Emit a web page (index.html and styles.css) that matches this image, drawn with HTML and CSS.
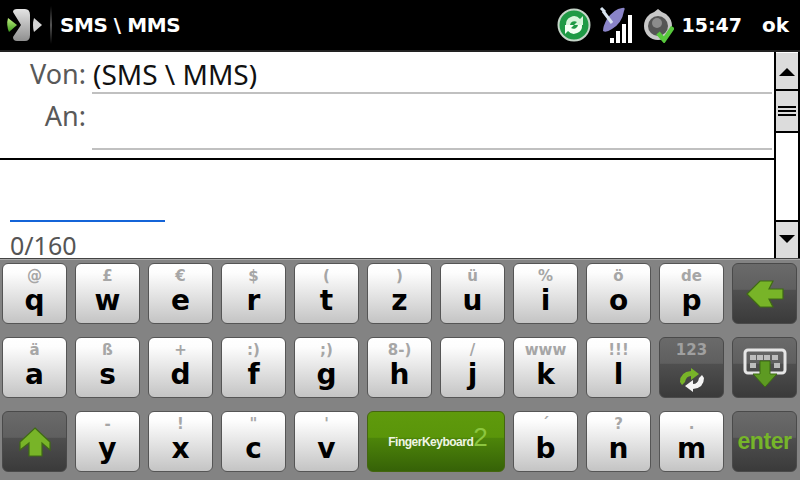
FILE: index.html
```html
<!DOCTYPE html>
<html lang="de">
<head>
<meta charset="utf-8">
<title>SMS \ MMS</title>
<link rel="stylesheet" href="styles.css">
</head>
<body>
<div class="screen">
  <header class="titlebar">
    <svg class="logo" width="46" height="40" viewBox="0 0 46 40">
      <defs>
        <linearGradient id="lg" x1="0" y1="0" x2="0" y2="1"><stop offset="0" stop-color="#e4e4e4"/><stop offset="1" stop-color="#8f8f8f"/></linearGradient>
        <linearGradient id="lgg" x1="0" y1="0" x2="0" y2="1"><stop offset="0" stop-color="#c0f080"/><stop offset="1" stop-color="#3c9a1a"/></linearGradient>
      </defs>
      <path d="M6 13 L15 20 L7 27 Q4 20 6 13Z" fill="url(#lgg)"/>
      <path d="M11 7 Q11 4 15 4 L23 4 Q28 4 28 10 L28 30 Q28 36 23 36 L15 36 Q11 36 11 32 L19 20 Z" fill="url(#lg)"/>
      <path d="M32 13 L40 20 L32 27 Q30 20 32 13Z" fill="#d4d4d4"/>
    </svg>
    <span class="divider"></span>
    <h1 class="title">SMS \ MMS</h1>
    <div class="tray">
      <svg class="sync" width="34" height="34" viewBox="0 0 34 34">
        <circle cx="17" cy="17" r="15.5" fill="#1f9a45" stroke="#c5d5c8" stroke-width="2"/>
        <path d="M9 17 A8 8 0 0 1 23 11 L26 8 L26 17 L17 17 L20 14 A4.5 4.5 0 0 0 13 17Z" fill="#d8f5dc"/>
        <path d="M25 17 A8 8 0 0 1 11 23 L8 26 L8 17 L17 17 L14 20 A4.5 4.5 0 0 0 21 17Z" fill="#f4fff4"/>
      </svg>
      <svg class="signal" width="34" height="40" viewBox="0 0 34 40">
        <path d="M5 26 Q8 28 14 24 Q24 18 26 6 Q28 2 24 3 Q16 4 9 14 Q5 21 5 26Z" fill="#8a84c8"/>
        <path d="M14 18 L5 6 M3 3 L7 7" stroke="#d8e4f0" stroke-width="3"/>
        <path d="M12 38h4v-5h-4zM18 38h4V26h-4zM24 38h4V19h-4zM30 38h4V10h-4z" fill="#fff"/>
      </svg>
      <svg class="volume" width="32" height="36" viewBox="0 0 32 36">
        <path d="M16 2 Q19 5 24 7 Q30 12 30 19 A14 14 0 0 1 2 19 Q2 12 8 7 Q13 5 16 2Z" fill="#c8c8c8"/>
        <circle cx="16" cy="19" r="10" fill="#555"/>
        <circle cx="15" cy="16" r="5" fill="#8c8c8c"/>
        <path d="M16 26 L22 33 L31 20" fill="none" stroke="#57c83c" stroke-width="4.5"/>
      </svg>
      <span class="clock">15:47</span>
      <span class="ok">ok</span>
    </div>
  </header>

  <main class="content">
    <div class="compose">
      <section class="fields">
        <div class="field field-from">
          <span class="label">Von:</span>
          <span class="value">(SMS \ MMS)</span>
        </div>
        <div class="field field-to">
          <span class="label">An:</span>
          <span class="value"></span>
        </div>
      </section>
      <section class="message">
        <div class="caret-line"></div>
        <div class="counter">0/160</div>
      </section>
    </div>
    <aside class="scrollbar">
      <div class="sb-btn sb-up"><span class="arrow-up"></span></div>
      <div class="sb-thumb"><span class="grip"></span><span class="grip"></span><span class="grip"></span></div>
      <div class="sb-track"></div>
      <div class="sb-btn sb-down"><span class="arrow-down"></span></div>
    </aside>
  </main>

  <section class="keyboard">
    <div class="key"><span class="alt">@</span><span class="ch">q</span></div>
    <div class="key"><span class="alt">£</span><span class="ch">w</span></div>
    <div class="key"><span class="alt">€</span><span class="ch">e</span></div>
    <div class="key"><span class="alt">$</span><span class="ch">r</span></div>
    <div class="key"><span class="alt">(</span><span class="ch">t</span></div>
    <div class="key"><span class="alt">)</span><span class="ch">z</span></div>
    <div class="key"><span class="alt">ü</span><span class="ch">u</span></div>
    <div class="key"><span class="alt">%</span><span class="ch">i</span></div>
    <div class="key"><span class="alt">ö</span><span class="ch">o</span></div>
    <div class="key"><span class="alt">de</span><span class="ch">p</span></div>
    <div class="key dark">
      <svg width="38" height="28" viewBox="0 0 38 28"><path d="M1 14 L14 1 L27 1 L23 9 L37 9 L37 19 L23 19 L27 27 L14 27Z" fill="#78b428" stroke="#3f6a14" stroke-width="1.2"/></svg>
    </div>

    <div class="key"><span class="alt">ä</span><span class="ch">a</span></div>
    <div class="key"><span class="alt">ß</span><span class="ch">s</span></div>
    <div class="key"><span class="alt">+</span><span class="ch">d</span></div>
    <div class="key"><span class="alt">:)</span><span class="ch">f</span></div>
    <div class="key"><span class="alt">;)</span><span class="ch">g</span></div>
    <div class="key"><span class="alt">8-)</span><span class="ch">h</span></div>
    <div class="key"><span class="alt">/</span><span class="ch">j</span></div>
    <div class="key"><span class="alt">www</span><span class="ch">k</span></div>
    <div class="key"><span class="alt">!!!</span><span class="ch">l</span></div>
    <div class="key dark sym">
      <span class="alt">123</span>
      <svg width="30" height="26" viewBox="0 0 30 26"><path d="M3 15 Q3 5 14 4 L14 1 L22 7 L14 13 L14 9 Q9 9 8 15 L5 18Z" fill="#78b428"/><path d="M27 11 Q27 21 16 22 L16 25 L8 19 L16 13 L16 17 Q21 17 22 11 L25 8Z" fill="#f4f4f4"/></svg>
    </div>
    <div class="key dark">
      <svg width="44" height="40" viewBox="0 0 44 40">
        <rect x="2" y="2" width="40" height="23" rx="3" fill="none" stroke="#e6e6e6" stroke-width="3"/>
        <path d="M7 7h6v5H7zM14 7h6v5h-6zM21 7h6v5h-6zM29 7h6v5h-6zM7 15h6v5H7zM31 15h6v5h-6z" fill="#bdbdbd"/>
        <path d="M17 13h10v13h7L22 39 10 26h7Z" fill="#5d9a22" stroke="#3c6a12"/>
      </svg>
    </div>

    <div class="key dark">
      <svg width="32" height="30" viewBox="0 0 32 30"><path d="M16 1 L31 15 L31 23 L23 16 L23 29 L10 29 L10 16 L1 23 L1 15Z" fill="#78b428" stroke="#3f6a14" stroke-width="1.2"/></svg>
    </div>
    <div class="key"><span class="alt">-</span><span class="ch">y</span></div>
    <div class="key"><span class="alt">!</span><span class="ch">x</span></div>
    <div class="key"><span class="alt">"</span><span class="ch">c</span></div>
    <div class="key"><span class="alt">'</span><span class="ch">v</span></div>
    <div class="key brand"><span class="brand-name">FingerKeyboard</span><span class="brand-two">2</span></div>
    <div class="key"><span class="alt">´</span><span class="ch">b</span></div>
    <div class="key"><span class="alt">?</span><span class="ch">n</span></div>
    <div class="key"><span class="alt">.</span><span class="ch">m</span></div>
    <div class="key dark"><span class="enter">enter</span></div>
  </section>
</div>
</body>
</html>
```
FILE: styles.css
```css
* { box-sizing: border-box; }
html, body { margin: 0; padding: 0; }
body { background: #fff; overflow: hidden; }
.screen { width: 800px; height: 480px; display: flex; flex-direction: column; font-family: "DejaVu Sans", sans-serif; }

.titlebar { height: 52px; flex: none; background: #000; border-bottom: 2px solid #222; display: flex; align-items: center; color: #fff; padding-left: 2px; }
.logo { flex: none; }
.divider { width: 2px; height: 38px; margin-left: 2px; background: linear-gradient(#000, #555 50%, #000); }
.title { margin: 0 0 0 8px; font: bold 20px "DejaVu Sans", sans-serif; letter-spacing: -0.45px; white-space: nowrap; }
.tray { margin-left: auto; display: flex; align-items: center; height: 100%; }
.sync { margin-right: 7px; }
.signal { margin-right: 10px; }
.volume { margin-right: 7px; }
.clock { font: bold 19px "DejaVu Sans", sans-serif; }
.ok { font: bold 20px "DejaVu Sans", sans-serif; margin-left: 20px; margin-right: 11px; }

.content { height: 206px; flex: none; display: flex; }
.compose { flex: 1; display: flex; flex-direction: column; min-width: 0; }
.fields { height: 108px; flex: none; border-bottom: 2px solid #000; font-family: "Noto Sans", sans-serif; }
.field { display: flex; }
.field-from { height: 42px; }
.field-to { height: 56px; }
.label { width: 86px; text-align: right; color: #595959; line-height: 44px; flex: none; font-size: 27px; }
.value { margin-left: 6px; margin-right: 2px; padding-left: 1px; flex: 1; border-bottom: 2px solid #c0c0c0; color: #111; line-height: 44px; font-size: 28px; white-space: nowrap; }
.message { flex: 1; padding-left: 10px; display: flex; flex-direction: column; }
.caret-line { width: 155px; height: 2px; background: #1464d8; margin-top: 60px; }
.counter { font: 25px/34px "Noto Sans", sans-serif; color: #555; margin-top: 6px; }

.scrollbar { width: 26px; flex: none; border-left: 2px solid #000; border-right: 2px solid #000; display: flex; flex-direction: column; }
.sb-btn { flex: none; background: #dcdcdc; display: flex; align-items: center; justify-content: center; }
.sb-up { height: 38px; border-bottom: 2px solid #000; margin-top: 1px; padding-top: 2px; }
.sb-down { height: 38px; border-top: 2px solid #000; padding-bottom: 2px; }
.arrow-up { width: 0; height: 0; border-left: 8px solid transparent; border-right: 8px solid transparent; border-bottom: 8px solid #000; }
.arrow-down { width: 0; height: 0; border-left: 8px solid transparent; border-right: 8px solid transparent; border-top: 8px solid #000; }
.sb-thumb { height: 42px; flex: none; background: #dcdcdc; border-bottom: 2px solid #000; display: flex; flex-direction: column; align-items: center; justify-content: center; gap: 2px; }
.grip { width: 18px; height: 2px; background: #000; }
.sb-track { flex: 1; background: #fff; }

.keyboard { flex: 1; background: #838383; border-top: 1px solid #444; box-shadow: inset 0 1px 0 #a8a8a8; padding: 4px 2px 0; display: grid; grid-template-columns: repeat(11, 65px); grid-auto-rows: 61px; column-gap: 8px; row-gap: 13px; align-content: start; }
.key { border-radius: 6px; border: 1px solid #555; background: linear-gradient(#fff, #fdfdfd 15%, #c4c4c4); display: flex; flex-direction: column; align-items: center; position: relative; overflow: hidden; }
.alt { font: bold 15px/18px "DejaVu Sans", sans-serif; color: #a6a6a6; margin-top: 3px; height: 18px; white-space: nowrap; }
.ch { font: bold 28px/30px "DejaVu Sans", sans-serif; color: #000; margin-top: 1px; }
.dark { background: linear-gradient(#6a6a6a, #5f5f5f 43%, #4f4f4f 44%, #3a3a3a); border-color: #4a4a4a; justify-content: center; }
.sym { justify-content: flex-start; }
.sym .alt { color: #a0a0a0; font-size: 15px; margin-top: 3px; }
.sym svg { margin-top: 8px; }
.brand { grid-column: span 2; flex-direction: row; justify-content: center; align-items: center; padding-left: 4px; border-color: #44660f; background: linear-gradient(#5f9a0c, #5a950a 43%, #4d850a 44%, #366207); color: #fff; }
.brand-name { font: bold 12px "Liberation Sans", sans-serif; letter-spacing: -0.5px; color: #f0f5e4; }
.brand-two { font: 26px "Liberation Sans", sans-serif; color: #8cc63f; margin-top: -8px; }
.enter { font: bold 23px "Liberation Sans", sans-serif; color: #76b52a; letter-spacing: -0.4px; }
```
